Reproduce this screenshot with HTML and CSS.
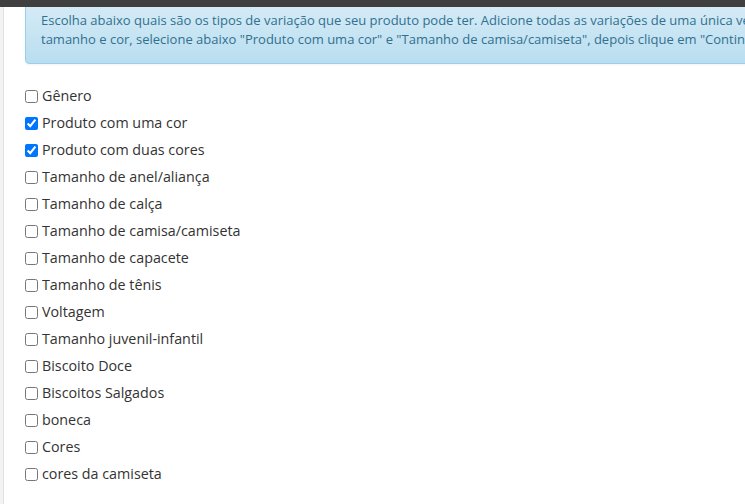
FILE: index.html
```html
<!DOCTYPE html>
<html lang="pt-BR">

<head>
    <meta charset="UTF-8">
    <meta name="viewport" content="width=device-width, initial-scale=1.0">
    <title>Variações do produto</title>
    <link rel="stylesheet" href="styles.css">
</head>

<body>
    <div class="topbar"></div>
    <div class="page">
        <div class="content">
            <div class="alert-info">
                Escolha abaixo quais são os tipos de variação que seu produto pode ter. Adicione todas as variações de uma única vez. Por exemplo, se seu produto tem<br>
                tamanho e cor, selecione abaixo "Produto com uma cor" e "Tamanho de camisa/camiseta", depois clique em "Continuar".
            </div>
            <div class="options">
                <label class="checkbox"><input type="checkbox"> Gênero</label>
                <label class="checkbox"><input type="checkbox" checked> Produto com uma cor</label>
                <label class="checkbox"><input type="checkbox" checked> Produto com duas cores</label>
                <label class="checkbox"><input type="checkbox"> Tamanho de anel/aliança</label>
                <label class="checkbox"><input type="checkbox"> Tamanho de calça</label>
                <label class="checkbox"><input type="checkbox"> Tamanho de camisa/camiseta</label>
                <label class="checkbox"><input type="checkbox"> Tamanho de capacete</label>
                <label class="checkbox"><input type="checkbox"> Tamanho de tênis</label>
                <label class="checkbox"><input type="checkbox"> Voltagem</label>
                <label class="checkbox"><input type="checkbox"> Tamanho juvenil-infantil</label>
                <label class="checkbox"><input type="checkbox"> Biscoito Doce</label>
                <label class="checkbox"><input type="checkbox"> Biscoitos Salgados</label>
                <label class="checkbox"><input type="checkbox"> boneca</label>
                <label class="checkbox"><input type="checkbox"> Cores</label>
                <label class="checkbox"><input type="checkbox"> cores da camiseta</label>
            </div>
        </div>
    </div>
</body>

</html>
```

FILE: styles.css
```css
html,
body {
    margin: 0;
    height: 100%;
    overflow: hidden;
}

body {
    background: #f3f3f3;
    font-family: "Open Sans", "Liberation Sans", sans-serif;
    color: #333;
}

.topbar {
    position: fixed;
    top: 0;
    left: 0;
    right: 0;
    height: 7px;
    background: #3f3f3f;
    z-index: 10;
}

.page {
    margin-left: 3px;
    height: 100%;
    overflow: hidden;
    background: #fff;
    border-left: 1px solid #e2e2e2;
}

.content {
    padding: 0 0 0 21px;
    margin-top: -5px;
    width: 1100px;
}

.alert-info {
    padding: 15px 14px 15px 15px;
    font-size: 13px;
    line-height: 18.57px;
    color: #31708f;
    background: linear-gradient(to bottom, #d9edf7 0, #b9def0 100%);
    border: 1px solid #9acfea;
    border-radius: 4px;
    box-shadow: inset 0 1px 0 rgba(255, 255, 255, .25), 0 1px 2px rgba(0, 0, 0, .05);
}

.options {
    padding-top: 22px;
    display: flex;
    flex-direction: column;
    gap: 7px;
}

.checkbox {
    display: flex;
    align-items: center;
    font-size: 14.3px;
    line-height: 20px;
}

.checkbox input {
    width: 13px;
    height: 13px;
    margin: 0 4px 0 0;
}
```
